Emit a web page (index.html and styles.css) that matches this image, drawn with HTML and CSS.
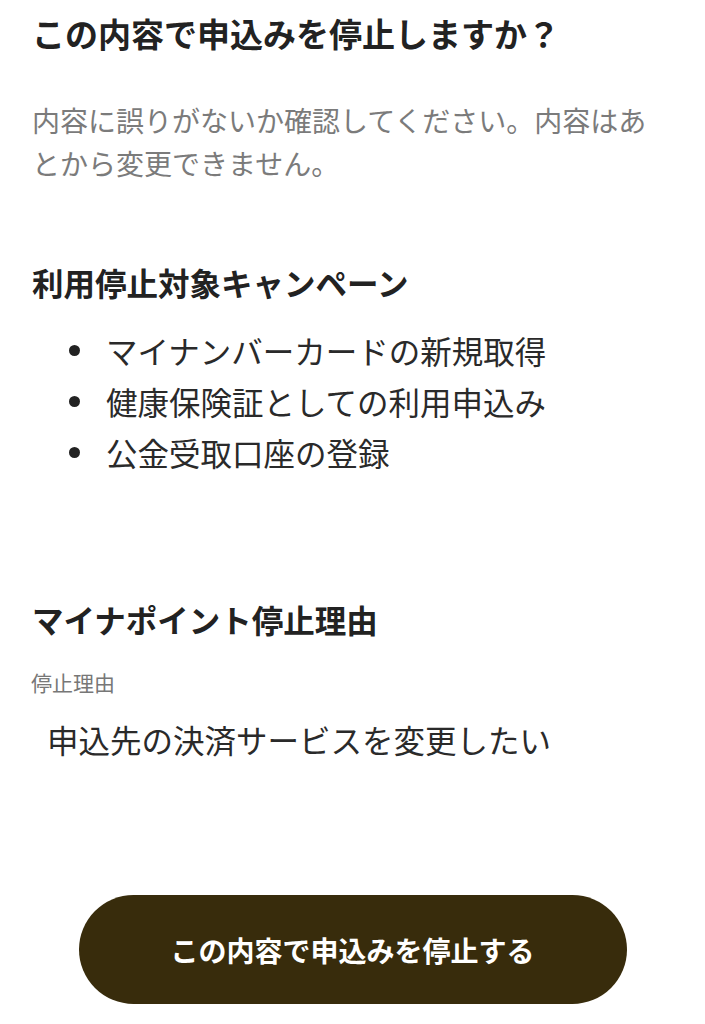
FILE: index.html
```html
<!DOCTYPE html>
<html lang="ja">
<head>
<meta charset="utf-8">
<link rel="stylesheet" href="styles.css">
</head>
<body>
<main class="page">
  <h1 class="title">この内容で申込みを停止しますか？</h1>
  <p class="lead">内容に誤りがないか確認してください。内容はあとから変更できません。</p>

  <h2 class="section-title campaign-title">利用停止対象キャンペーン</h2>
  <ul class="campaigns">
    <li>マイナンバーカードの新規取得</li>
    <li>健康保険証としての利用申込み</li>
    <li>公金受取口座の登録</li>
  </ul>

  <h2 class="section-title reason-title">マイナポイント停止理由</h2>
  <div class="field-label">停止理由</div>
  <div class="field-value">申込先の決済サービスを変更したい</div>

  <div class="actions">
    <button class="primary-btn" type="button">この内容で申込みを停止する</button>
  </div>
</main>
</body>
</html>
```

FILE: styles.css
```css
* { box-sizing: border-box; }
html, body { margin: 0; padding: 0; background: #fff; }
body {
  font-family: "Noto Sans CJK JP", "Noto Sans", sans-serif;
  color: #222;
}
.page {
  padding: 13px 32px 0 32px;
}
.title {
  margin: 0;
  font-size: 33px;
  line-height: 40px;
  font-weight: 700;
  color: #222;
  white-space: nowrap;
}
.lead {
  margin: 46px 0 0 0;
  font-size: 28px;
  line-height: 43px;
  color: #7b7b7b;
  width: 625px;
}
.section-title {
  margin: 0;
  font-size: 31.5px;
  line-height: 40px;
  font-weight: 700;
  color: #222;
}
.campaign-title { margin-top: 77px; }
.campaigns {
  list-style: none;
  margin: 23px 0 0 0;
  padding: 0 0 0 37px;
}
.campaigns li {
  display: flex;
  align-items: center;
  font-size: 31.5px;
  line-height: 51px;
  color: #2a2a2a;
}
.campaigns li::before {
  content: "";
  width: 11px;
  height: 11px;
  border-radius: 50%;
  background: #222;
  margin-right: 26px;
  flex: none;
}
.reason-title { margin-top: 121px; }
.field-label {
  margin-top: 28px;
  margin-left: -1px;
  font-size: 21px;
  line-height: 30px;
  color: #777;
}
.field-value {
  margin-top: 22px;
  padding-left: 15px;
  font-size: 31.5px;
  line-height: 40px;
  color: #2a2a2a;
}
.actions {
  display: flex;
  justify-content: center;
  margin: 136px -32px 0 -32px;
}
.primary-btn {
  width: 548px;
  height: 109px;
  border: none;
  border-radius: 55px;
  background: #382c0c;
  color: #fff;
  font-family: "Noto Sans CJK JP", "Noto Sans", sans-serif;
  font-size: 28px;
  font-weight: 700;
  padding: 0;
}
```
